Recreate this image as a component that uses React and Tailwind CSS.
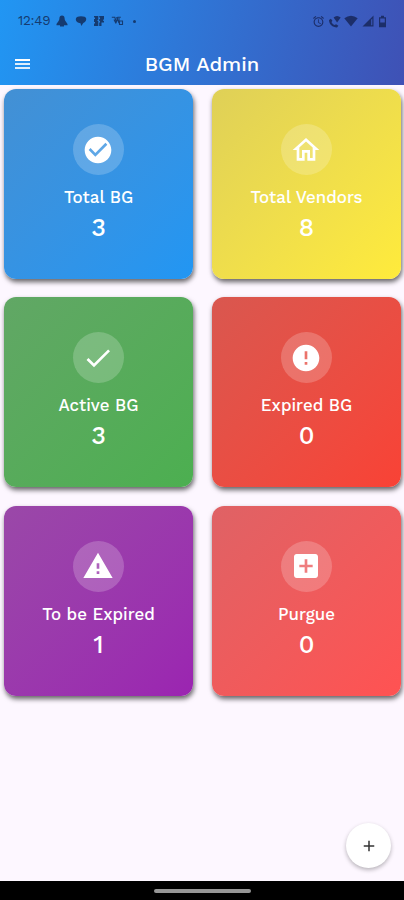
import React from "react";

const paths = {
  checkCircle:
    "M12 2C6.48 2 2 6.48 2 12s4.48 10 10 10 10-4.48 10-10S17.52 2 12 2zm-2 15l-5-5 1.41-1.41L10 14.17l7.59-7.59L19 8l-9 9z",
  home: "M12 5.69l5 4.5V18h-2v-6H9v6H7v-7.81l5-4.5M12 3L2 12h3v8h6v-6h2v6h6v-8h3L12 3z",
  check: "M9 16.17L4.83 12l-1.42 1.41L9 19 21 7l-1.41-1.41z",
  error: "M12 2C6.48 2 2 6.48 2 12s4.48 10 10 10 10-4.48 10-10S17.52 2 12 2zm1 15h-2v-2h2v2zm0-4h-2V7h2v6z",
  warning: "M1 21h22L12 2 1 21zm12-3h-2v-2h2v2zm0-4h-2v-4h2v4z",
  addBox: "M19 3H5c-1.11 0-2 .9-2 2v14c0 1.1.89 2 2 2h14c1.1 0 2-.9 2-2V5c0-1.1-.9-2-2-2zm-2 10h-4v4h-2v-4H7v-2h4V7h2v4h4v2z",
  add: "M19 13h-6v6h-2v-6H5v-2h6V5h2v6h6v2z",
  alarm:
    "M22 5.72l-4.6-3.86-1.29 1.53 4.6 3.86L22 5.72zM7.88 3.39L6.6 1.86 2 5.71l1.29 1.53 4.59-3.85zM12.5 8H11v6l4.75 2.85.75-1.23-4-2.37V8zM12 4c-4.97 0-9 4.03-9 9s4.02 9 9 9c4.97 0 9-4.03 9-9s-4.03-9-9-9zm0 16c-3.87 0-7-3.13-7-7s3.13-7 7-7 7 3.13 7 7-3.13 7-7 7z",
};

const cards = [
  { label: "Total BG", value: 3, icon: paths.checkCircle, bg: "bg-linear-to-br from-[#4390d4] to-[#2196f3]" },
  { label: "Total Vendors", value: 8, icon: paths.home, bg: "bg-linear-to-br from-[#dfd057] to-[#ffeb3b]" },
  { label: "Active BG", value: 3, icon: paths.check, bg: "bg-linear-to-br from-[#61a765] to-[#4caf50]" },
  { label: "Expired BG", value: 0, icon: paths.error, bg: "bg-linear-to-br from-[#d9574f] to-[#f94235]" },
  { label: "To be Expired", value: 1, icon: paths.warning, bg: "bg-linear-to-br from-[#9a48a8] to-[#9b24b1]" },
  { label: "Purgue", value: 0, icon: paths.addBox, bg: "bg-linear-to-br from-[#df6265] to-[#ff5252]" },
];

function Icon({ d, className }) {
  return (
    <svg viewBox="0 0 24 24" fill="currentColor" className={className}>
      <path d={d} />
    </svg>
  );
}

function StatusBar() {
  return (
    <div className="flex h-[42px] items-center pl-[18px] pr-[17px] text-[#153b70]">
      <span className="w-[38px] text-[13.5px] leading-none tracking-[-0.3px]">12:49</span>
      <svg viewBox="0 0 12 12" fill="currentColor" className="h-3 w-3">
        <path d="M6 .5c1.700 0 2.600 1.300 2.600 2.800 0 1.200.3 2 1 2.900L11.500 9v1.300H.5V9l1.900-2.800c.7-.9 1-1.700 1-2.900C3.400 1.800 4.300.5 6 .5z" />
        <path d="M4 10h4v1.500H4z" />
      </svg>
      <svg viewBox="0 0 12 12" fill="currentColor" className="ml-[7px] h-3 w-3">
        <path d="M4 1.500Q6 .8 8 1.500C10.500 1.500 11.500 3 11.200 4.600 11 6.500 9.500 7.500 8.300 8L6.300 11 5.500 8.200C2.500 8.200.8 6.500.8 4.600.8 2.800 2.200 1.500 4 1.500z" />
      </svg>
      <svg viewBox="0 0 12 12" fill="currentColor" className="ml-[6px] h-3 w-3">
        <path d="M1 1h4.300v4H4.500V6h.8v5H1V8.500h1V7H1V4h1V2.500H1z" />
        <path d="M6.200 1H11v3.500h-.8V6h.8v1.500H8.500V11H6.200V7.500H7V6h-.8V4H7V2.500h-.8z" />
      </svg>
      <svg viewBox="0 0 13 12" fill="none" stroke="currentColor" strokeWidth="1.1" className="ml-[6px] h-3 w-[13px]">
        <path d="M.8 2.300h3L5.300 7 6.800 2.300h3M3 4.500l2 4M5.500 2.300L8 8V3M8.500 6h3v3.500h-3z" />
      </svg>
      <span className="ml-[9px] h-[3px] w-[3px] rounded-full bg-[#153b70]" />
      <div className="ml-auto flex items-center text-[#1c2e69]">
        <Icon d={paths.alarm} className="h-[13px] w-[13px]" />
        <svg viewBox="0 0 13 13" fill="currentColor" className="ml-[3px] h-[13px] w-[13px]">
          <path d="M2.900 3.800L1 5c0 4.300 3.500 7.400 8 7.400l1.400-1.700-2.300-1.500-1.600.9C5.100 9.500 4 8.400 3.500 7.100l.9-1.400z" />
          <path d="M5.600 2.500Q9-.7 12.700 2.500L9.100 7.500z" />
        </svg>
        <svg viewBox="0 0 14 12" fill="currentColor" className="ml-[3px] h-3 w-[14px]">
          <path d="M.3 3.300Q7-1.900 13.700 3.300L7 11.500z" />
        </svg>
        <svg viewBox="0 0 12 12" fill="currentColor" className="ml-[4px] h-3 w-3">
          <path d="M.5 11.500L8 4v7.500z" />
          <path d="M8 4l3.500-3.500v11H8zm1.200.7v5.600h1.100V3.500z" />
        </svg>
        <svg viewBox="0 0 9 13" fill="currentColor" className="ml-[4px] h-[13px] w-[9px]">
          <path fillRule="evenodd" d="M3 .8h3v1.400h2v10H1v-10h2zM2.200 3.500v4h4.600v-4z" />
        </svg>
      </div>
    </div>
  );
}

function StatCard({ label, value, icon, bg }) {
  return (
    <section
      className={`flex h-[190px] flex-col items-center rounded-[12px] pt-[35px] text-white shadow-[1px_3px_5px_rgba(0,0,0,0.6)] ${bg}`}
    >
      <div className="flex h-[51px] w-[51px] items-center justify-center rounded-full bg-white/20">
        <Icon d={icon} className="mr-px h-[32px] w-[32px]" />
      </div>
      <h2 className="mt-[11px] whitespace-nowrap text-[16.9px] font-medium leading-[22px]">{label}</h2>
      <p className="mt-[5px] text-[25px] font-medium leading-[30px]">{value}</p>
    </section>
  );
}

export default function App() {
  return (
    <div className="flex h-[900px] w-[404px] flex-col overflow-hidden bg-[#fdf7ff] font-['Work_Sans',Inter,sans-serif]">
      <header className="h-[85px] shrink-0 bg-linear-[102deg] from-[#2196f3] to-[#3f51b5]">
        <StatusBar />
        <div className="grid h-[43px] grid-cols-[40px_1fr_40px] items-center">
          <div className="ml-[15px] flex w-[15px] flex-col gap-[2px]">
            <span className="h-[2px] bg-white" />
            <span className="h-[2px] bg-white/85" />
            <span className="h-[2px] bg-white/85" />
          </div>
          <h1 className="text-center text-[20.2px] font-medium leading-[26px] text-white">BGM Admin</h1>
        </div>
      </header>
      <main className="flex min-h-0 flex-1 flex-col">
        <div className="grid grid-cols-2 gap-x-[19px] gap-y-[18.3px] pl-[4px] pr-[3px] pt-[4px]">
          {cards.map((card) => (
            <StatCard key={card.label} {...card} />
          ))}
        </div>
        <button
          aria-label="Add"
          className="mb-[13px] mr-[13px] mt-auto flex h-[45px] w-[45px] items-center justify-center self-end rounded-full bg-white text-[#333] shadow-[0_2px_4px_rgba(0,0,0,0.28)]"
        >
          <Icon d={paths.add} className="h-[18px] w-[18px]" />
        </button>
      </main>
      <footer className="flex h-[19px] shrink-0 items-center justify-center bg-black">
        <div className="h-[4px] w-[97px] rounded-full bg-[#969696]" />
      </footer>
    </div>
  );
}
